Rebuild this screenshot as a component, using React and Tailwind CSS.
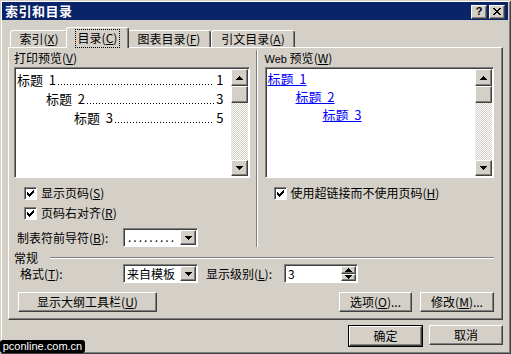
import React from "react";

const raised =
  "border border-t-white border-l-white border-r-[#404040] border-b-[#404040] shadow-[inset_-1px_-1px_#808080]";
const sunken =
  "border border-t-[#808080] border-l-[#808080] border-r-white border-b-white shadow-[inset_1px_1px_#404040]";

function Arrow({ down }) {
  return (
    <svg width="7" height="4" viewBox="0 0 7 4" shapeRendering="crispEdges">
      {down ? (
        <path d="M0 0h7v1h-1v1h-1v1h-1v1h-1v-1h-1v-1h-1v-1h-1z" fill="#000" />
      ) : (
        <path d="M3 0h1v1h1v1h1v1h1v1h-7v-1h1v-1h1v-1h1z" fill="#000" />
      )}
    </svg>
  );
}

function Key({ k }) {
  return (
    <span>
      (<u>{k}</u>)
    </span>
  );
}

function CheckBox({ label, k }) {
  return (
    <div className="flex items-center h-[16px] gap-[4px]">
      <div className={`w-[13px] h-[13px] bg-white flex items-center justify-center ${sunken}`}>
        <svg width="7" height="7" viewBox="0 0 7 7" shapeRendering="crispEdges">
          <rect x="0" y="2" width="1" height="3" />
          <rect x="1" y="3" width="1" height="3" />
          <rect x="2" y="4" width="1" height="3" />
          <rect x="3" y="3" width="1" height="3" />
          <rect x="4" y="2" width="1" height="3" />
          <rect x="5" y="1" width="1" height="3" />
          <rect x="6" y="0" width="1" height="3" />
        </svg>
      </div>
      <span className="whitespace-nowrap">
        {label}
        <Key k={k} />
      </span>
    </div>
  );
}

function ScrollBar() {
  return (
    <div className="flex flex-col w-[17px] shrink-0 bg-[repeating-conic-gradient(#d4d0c8_0_25%,#ffffff_0_50%)] bg-[length:2px_2px]">
      <div className={`h-[17px] bg-[#d4d0c8] flex items-center justify-center ${raised}`}>
        <Arrow />
      </div>
      <div className={`h-[17px] bg-[#d4d0c8] ${raised}`} />
      <div className="flex-1" />
      <div className={`h-[16px] bg-[#d4d0c8] flex items-center justify-center ${raised}`}>
        <Arrow down />
      </div>
    </div>
  );
}

function DropButton() {
  return (
    <div className={`w-[16px] h-full shrink-0 bg-[#d4d0c8] flex items-center justify-center ${raised}`}>
      <Arrow down />
    </div>
  );
}

function Button({ children, className = "" }) {
  return (
    <div className={`h-[20px] flex items-center justify-center bg-[#d4d0c8] whitespace-nowrap ${raised} ${className}`}>
      {children}
    </div>
  );
}

function Tab({ children, className = "" }) {
  return (
    <div
      className={`h-[17px] flex items-center justify-center bg-[#d4d0c8] rounded-t-[3px] border-t border-l border-r border-t-white border-l-white border-r-[#404040] shadow-[inset_-1px_0_#808080] whitespace-nowrap ${className}`}
    >
      {children}
    </div>
  );
}

export default function App() {
  const printRows = [
    ["标题  1", "1", "pl-[1px]"],
    ["标题  2", "3", "pl-[30px]"],
    ["标题  3", "5", "pl-[58px]"],
  ];
  const webRows = [
    ["标题  1", "pl-[1px]"],
    ["标题  2", "pl-[29px]"],
    ["标题  3", "pl-[56px]"],
  ];

  return (
    <div className="relative w-[511px] h-[354px] overflow-hidden bg-[#d4d0c8] p-[2px] text-black text-[12px] leading-[14px] font-['Noto_Sans_CJK_SC',sans-serif] shadow-[inset_1px_1px_#d4d0c8,inset_-1px_-1px_#404040,inset_2px_2px_#ffffff,inset_-2px_-2px_#808080]">
      {/* title bar */}
      <div className="h-[18px] mr-[1px] bg-[#0a246a] flex items-center justify-between pl-[3px] pr-[3px]">
        <span className="text-white font-bold text-[13px] tracking-[0.5px]">索引和目录</span>
        <div className="flex gap-[2px] pt-[1px]">
          <div className={`w-[16px] h-[14px] bg-[#d4d0c8] flex items-center justify-center font-bold text-[11px] leading-none font-['Liberation_Sans',sans-serif] ${raised}`}>
            ?
          </div>
          <div className={`w-[16px] h-[14px] bg-[#d4d0c8] flex items-center justify-center ${raised}`}>
            <svg width="8" height="7" viewBox="0 0 8 7" shapeRendering="crispEdges">
              <path d="M0 0h2v1h1v1h2v-1h1v-1h2v1h-1v1h-1v1h-1v1h1v1h1v1h1v1h-2v-1h-1v-1h-2v1h-1v1h-2v-1h1v-1h1v-1h1v-1h-1v-1h-1v-1h-1z" />
            </svg>
          </div>
        </div>
      </div>

      {/* tabs */}
      <div className="mx-[6px] mt-[7px]">
        <div className="flex items-end h-[20px] pl-[2px]">
          <Tab className="w-[58px]">
            索引<Key k="X" />
          </Tab>
          <div className="relative z-10 -mx-[2px] -mb-[1px] w-[63px] h-[21px] flex items-center justify-center bg-[#d4d0c8] rounded-t-[3px] border-t border-l border-r border-t-white border-l-white border-r-[#404040] shadow-[inset_-1px_0_#808080]">
            <span className="px-[2px] h-[17px] flex items-center outline outline-1 outline-dotted outline-black">
              目录<Key k="C" />
            </span>
          </div>
          <Tab className="w-[84px]">
            图表目录<Key k="F" />
          </Tab>
          <Tab className="w-[84px]">
            引文目录<Key k="A" />
          </Tab>
        </div>

        {/* panel */}
        <div className={`w-[495px] h-[273px] flex flex-col pt-[2px] pl-[5px] pr-[8px] ${raised}`}>
          <div className="flex">
            {/* left column */}
            <div className="w-[236px] flex flex-col">
              <div className="h-[15px] leading-[15px]">
                打印预览<Key k="V" />
              </div>
              <div className={`mt-[2px] h-[111px] p-[1px] flex bg-white ${sunken}`}>
                <div className="flex-1 min-w-0 overflow-hidden pt-[1px] pr-[7px] text-[13px] leading-[19px]">
                  {printRows.map(([t, n, ind]) => (
                    <div key={t} className={`flex h-[19px] ${ind}`}>
                      <span className="whitespace-pre">{t}</span>
                      <span className="flex-1 self-end mb-[4px] mx-[2px] h-[1px] bg-[linear-gradient(to_right,#000000_1px,transparent_1px)] bg-[length:3px_1px]" />
                      <span>{n}</span>
                    </div>
                  ))}
                </div>
                <ScrollBar />
              </div>
              <div className="mt-[7px] pl-[10px]">
                <CheckBox label="显示页码" k="S" />
              </div>
              <div className="mt-[4px] pl-[10px]">
                <CheckBox label="页码右对齐" k="R" />
              </div>
              <div className="mt-[7px] flex items-center h-[19px]">
                <span className="w-[109px] pl-[3px] whitespace-nowrap">
                  制表符前导符<Key k="B" />:
                </span>
                <div className={`w-[75px] h-[19px] p-[1px] flex bg-white ${sunken}`}>
                  <span className="flex-1 min-w-0 pl-[3px] leading-[13px] tracking-[2px] whitespace-nowrap">
                    .........
                  </span>
                  <DropButton />
                </div>
              </div>
            </div>

            {/* separator */}
            <div className="ml-[6px] w-[2px] border-l border-l-[#808080] border-r border-r-white" />

            {/* right column */}
            <div className="ml-[7px] w-[230px] flex flex-col">
              <div className="h-[15px] leading-[15px]">
                <span className="font-['Liberation_Sans',sans-serif] text-[11px]">Web</span> 预览<Key k="W" />
              </div>
              <div className={`mt-[2px] h-[111px] p-[1px] flex bg-white ${sunken}`}>
                <div className="flex-1 min-w-0 pt-[1px] text-[13px] leading-[18px]">
                  {webRows.map(([t, ind]) => (
                    <div key={t} className={`h-[18px] ${ind}`}>
                      <span className="text-[#0000ff] underline whitespace-pre">{t}</span>
                    </div>
                  ))}
                </div>
                <ScrollBar />
              </div>
              <div className="mt-[7px] pl-[9px]">
                <CheckBox label="使用超链接而不使用页码" k="H" />
              </div>
            </div>
          </div>

          {/* 常规 */}
          <div className="mt-[4px] h-[13px] flex items-center">
            <span className="whitespace-nowrap">常规</span>
            <div className="ml-[12px] flex-1 h-[2px] border-t border-t-[#808080] border-b border-b-white" />
          </div>
          <div className="h-[19px] flex items-center">
            <span className="w-[109px] pl-[6px] whitespace-nowrap">
              格式<Key k="T" />:
            </span>
            <div className={`w-[75px] h-[19px] p-[1px] flex bg-white ${sunken}`}>
              <span className="flex-1 min-w-0 pl-[2px] leading-[15px] whitespace-nowrap">来自模板</span>
              <DropButton />
            </div>
            <span className="ml-[8px] w-[78px] whitespace-nowrap">
              显示级别<Key k="L" />:
            </span>
            <div className={`w-[74px] h-[19px] p-[1px] flex bg-white ${sunken}`}>
              <span className="flex-1 pl-[2px] leading-[15px]">3</span>
              <div className="w-[15px] flex flex-col">
                <div className={`flex-1 bg-[#d4d0c8] flex items-center justify-center ${raised}`}>
                  <Arrow />
                </div>
                <div className={`flex-1 bg-[#d4d0c8] flex items-center justify-center ${raised}`}>
                  <Arrow down />
                </div>
              </div>
            </div>
          </div>
          <div className="mt-[9px] flex items-center">
            <Button className="ml-[4px] w-[139px]">
              显示大纲工具栏<Key k="U" />
            </Button>
            <div className="flex-1" />
            <Button className="w-[73px]">
              选项<Key k="O" />...
            </Button>
            <Button className="ml-[8px] w-[74px]">
              修改<Key k="M" />...
            </Button>
          </div>
        </div>

        {/* dialog buttons */}
        <div className="mt-[5px] flex justify-end gap-[6px] w-[495px]">
          <div className="border border-black">
            <Button className="w-[73px] h-[18px]">确定</Button>
          </div>
          <Button className="w-[74px]">取消</Button>
        </div>
      </div>

      {/* watermark */}
      <div className="absolute left-0 bottom-[1px] h-[13px] w-[85px] rounded-[3px] bg-black text-white flex items-center justify-center text-[11px] leading-none font-['Liberation_Sans',sans-serif]">
        pconline.com.cn
      </div>
    </div>
  );
}
